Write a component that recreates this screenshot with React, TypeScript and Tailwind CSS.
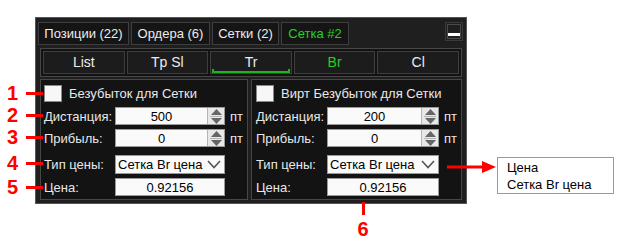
import React from 'react';

const font = "font-['Liberation_Sans',Arial,sans-serif]";

const Spinner = () => (
  <div className="flex h-full w-[17px] flex-col border-l border-[#b5b5b5] bg-[#e8e8e8]">
    <div className="flex flex-1 items-end justify-center pb-[1px]">
      <svg width="11" height="6" viewBox="0 0 11 6">
        <path d="M0 6 L5.5 0 L11 6 Z" fill="#666" />
      </svg>
    </div>
    <div className="mx-[2px] h-px bg-[#b5b5b5]" />
    <div className="flex flex-1 items-start justify-center pt-[1px]">
      <svg width="11" height="6" viewBox="0 0 11 6">
        <path d="M0 0 L5.5 6 L11 0 Z" fill="#666" />
      </svg>
    </div>
  </div>
);

const Chevron = () => (
  <svg width="14" height="9" viewBox="0 0 14 9" className="mr-[3px]">
    <path d="M1 1 L7 7.5 L13 1" fill="none" stroke="#555" strokeWidth="1.6" />
  </svg>
);

const Row = ({ label, children, suffix, h }: { label: string; children: React.ReactNode; suffix?: string; h: string }) => (
  <div className={`flex items-center leading-none ${h}`}>
    <div className="w-[71px] text-[13px] text-[#e8e8e8]">{label}</div>
    <div className="h-full flex-1">{children}</div>
    <div className="w-[22px] pl-[5px] text-[13px] text-[#e8e8e8]">{suffix}</div>
  </div>
);

const NumInput = ({ value }: { value: string }) => (
  <div className="flex h-full border border-[#9a9a9a] bg-[#fafafa]">
    <div className="flex flex-1 items-center justify-center text-[13px] text-black">{value}</div>
    <Spinner />
  </div>
);

const SelectBox = () => (
  <div className="flex h-full items-center justify-between border border-[#9a9a9a] bg-[#fafafa] pl-[2px]">
    <span className="text-[13px] text-black">Сетка Br цена</span>
    <Chevron />
  </div>
);

const PlainInput = ({ value }: { value: string }) => (
  <div className="flex h-full items-center justify-center border border-[#9a9a9a] bg-[#fafafa] text-[13px] text-black">
    {value}
  </div>
);

const Panel = ({ title, dist, className }: { title: string; dist: string; className: string }) => (
  <div className={`flex flex-col border border-[#474747] bg-[#131313] pt-[5px] ${className}`}>
    <div className="flex h-[17px] items-center gap-[7px] leading-none">
      <div className="h-[17px] w-[18px] border border-[#8a8a8a] bg-[#f7f7f7]" />
      <span className="text-[13px] text-[#e8e8e8]">{title}</span>
    </div>
    <div className="mt-[5px]">
      <Row label="Дистанция:" suffix="пт" h="h-[18px]"><NumInput value={dist} /></Row>
    </div>
    <div className="mt-[4px]">
      <Row label="Прибыль:" suffix="пт" h="h-[18px]"><NumInput value="0" /></Row>
    </div>
    <div className="mt-[8px]">
      <Row label="Тип цены:" h="h-[19px]"><SelectBox /></Row>
    </div>
    <div className="mt-[4px]">
      <Row label="Цена:" h="h-[18px]"><PlainInput value="0.92156" /></Row>
    </div>
  </div>
);

const Tab = ({ children, w, active }: { children: React.ReactNode; w: string; active?: boolean }) => (
  <div
    className={`flex h-[23px] items-center justify-center border border-[#3e3e3e] bg-[#151515] text-[13px] ${w} ${
      active ? 'text-[#25d025]' : 'text-[#ececec]'
    }`}
  >
    {children}
  </div>
);

const SubTab = ({ children, active, green }: { children: React.ReactNode; active?: boolean; green?: boolean }) => (
  <div
    className={`relative flex h-[23px] flex-1 items-center justify-center border border-[#3e3e3e] bg-[#1c1c1c] text-[14px] ${
      green ? 'text-[#25d025]' : 'text-[#ececec]'
    }`}
  >
    {children}
    {active && (
      <div className="absolute bottom-[0px] left-[1px] right-[1px] h-[4px] border-x-2 border-b-2 border-[#1fb21f] border-t-0" />
    )}
  </div>
);

export default function App() {
  return (
    <div className={`relative h-[244px] w-[620px] bg-white ${font}`}>
      <div className="pl-[35px] pt-[17px]">
        <div className="flex h-[187px] w-[432px] flex-col border border-[#555] bg-[#1f1f1f] px-[2px] pt-[4px]">
          {/* top tabs */}
          <div className="flex items-start gap-[2px]">
            <Tab w="w-[91px]">Позиции (22)</Tab>
            <Tab w="w-[79px]">Ордера (6)</Tab>
            <Tab w="w-[67px]">Сетки (2)</Tab>
            <Tab w="w-[68px]" active>Сетка #2</Tab>
            <div className="ml-auto mr-[1px] flex h-[19px] w-[18px] items-end justify-center border border-[#3a3a3a] p-[1px]">
              <div className="flex h-full w-full items-end justify-center border border-[#4a4a4a] pb-[2px]">
                <div className="h-[3px] w-[12px] bg-white" />
              </div>
            </div>
          </div>

          {/* sub tabs */}
          <div className="mx-[2px] mt-[3px] flex gap-[2px] border border-[#474747] bg-[#131313] p-[2px]">
            <SubTab>List</SubTab>
            <SubTab>Tp Sl</SubTab>
            <SubTab active>Tr</SubTab>
            <SubTab green>Br</SubTab>
            <SubTab>Cl</SubTab>
          </div>

          {/* body */}
          <div className="mx-[2px] mt-[2px] flex h-[121px] gap-[3px]">
            <Panel title="Безубыток для Сетки" dist="500" className="w-[208px] pl-[3px]" />
            <Panel title="Вирт Безубыток для Сетки" dist="200" className="flex-1 pl-[4px]" />
          </div>
        </div>
      </div>

      {/* annotations */}
      <div className="absolute left-[26px] top-[92px] h-[3px] w-[17px] bg-[#ff0000]" />
      <div className="absolute left-[26px] top-[114px] h-[3px] w-[17px] bg-[#ff0000]" />
      <div className="absolute left-[26px] top-[136px] h-[3px] w-[17px] bg-[#ff0000]" />
      <div className="absolute left-[26px] top-[162px] h-[3px] w-[17px] bg-[#ff0000]" />
      <div className="absolute left-[26px] top-[186px] h-[3px] w-[17px] bg-[#ff0000]" />
      <div className="absolute left-[0px] top-[82px] w-[18px] text-right text-[20px] font-bold leading-[22px] text-[#ff0000]">1</div>
      <div className="absolute left-[0px] top-[104px] w-[18px] text-right text-[20px] font-bold leading-[22px] text-[#ff0000]">2</div>
      <div className="absolute left-[0px] top-[126px] w-[18px] text-right text-[20px] font-bold leading-[22px] text-[#ff0000]">3</div>
      <div className="absolute left-[0px] top-[152px] w-[18px] text-right text-[20px] font-bold leading-[22px] text-[#ff0000]">4</div>
      <div className="absolute left-[0px] top-[176px] w-[18px] text-right text-[20px] font-bold leading-[22px] text-[#ff0000]">5</div>

      <div className="absolute left-[362px] top-[202px] h-[13px] w-[3px] bg-[#ff0000]" />
      <div className="absolute left-[354px] top-[218px] w-[18px] text-center text-[20px] font-bold leading-[22px] text-[#ff0000]">6</div>

      <svg className="absolute left-[447px] top-[161px]" width="50" height="12" viewBox="0 0 50 12">
        <path d="M0 6 H38" stroke="#ff0000" strokeWidth="3" />
        <path d="M35 0 L49 6 L35 12 Z" fill="#ff0000" />
      </svg>

      <div className="absolute left-[497px] top-[157px] flex h-[37px] w-[117px] flex-col justify-center border border-[#9a9a9a] bg-white pl-[9px] text-[13px] leading-[17px] text-black">
        <div>Цена</div>
        <div>Сетка Br цена</div>
      </div>
    </div>
  );
}
